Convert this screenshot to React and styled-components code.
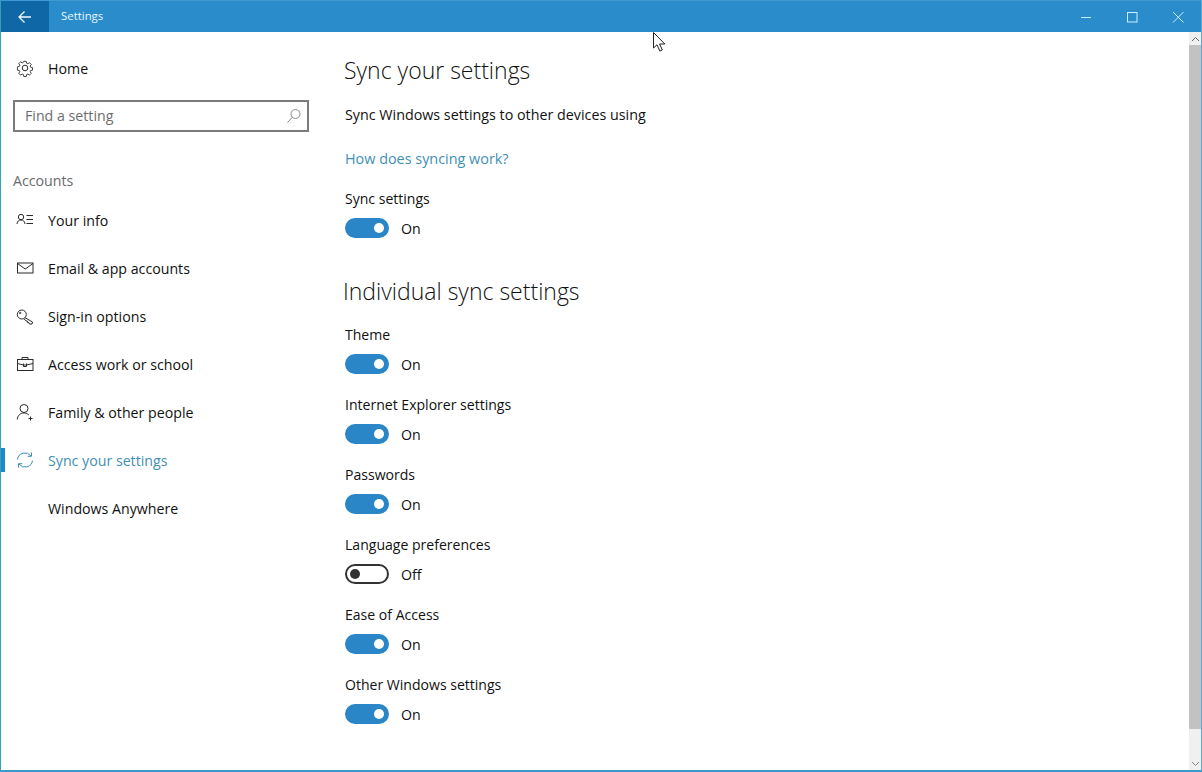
import React from "react";
import styled, { createGlobalStyle } from "styled-components";

const Global = createGlobalStyle`
  html, body { margin: 0; padding: 0; background: #fff; }
  * { box-sizing: border-box; }
`;

const Win = styled.div`
  position: relative;
  width: 1202px;
  height: 772px;
  display: flex;
  flex-direction: column;
  overflow: hidden;
  background: #fff;
  font-family: "Open Sans", "Noto Sans", sans-serif;
  color: #111;
  border-left: 1px solid #35a0b8;
  border-right: 1px solid #5aa9d6;
  border-bottom: 2px solid #3a9cc4;
`;
const TitleBar = styled.header`
  height: 32px;
  margin-left: -1px;
  margin-right: -1px;
  padding-right: 1px;
  flex: none;
  display: flex;
  align-items: center;
  background: #2a8ccb;
  border-top: 1px solid #3f9ad3;
  color: #e6f6ff;
`;
const BackBtn = styled.div`
  width: 49px;
  height: 31px;
  display: flex;
  align-items: center;
  justify-content: center;
  background: #0f67a6;
`;
const AppName = styled.span`
  margin-left: 12px;
  padding-bottom: 2px;
  font-size: 11.4px;
  flex: 1;
`;
const WinBtn = styled.div`
  width: 46px;
  height: 31px;
  display: flex;
  align-items: center;
  justify-content: center;
`;
const Body = styled.div`
  flex: 1;
  display: flex;
  min-height: 0;
`;
const Sidebar = styled.nav`
  width: 342px;
  flex: none;
  padding-top: 12px;
  display: flex;
  flex-direction: column;
`;
const Row = styled.div`
  position: relative;
  height: 48px;
  display: flex;
  align-items: center;
  font-size: 14.2px;
  color: ${p => (p.$active ? "#3f8fb4" : "#111")};
`;
const Marker = styled.span`
  position: absolute;
  left: -1px;
  top: 12px;
  width: 5px;
  height: 24px;
  background: #1f88c9;
`;
const IconSlot = styled.span`
  width: 47px;
  padding-left: 15px;
  flex: none;
  display: flex;
  align-items: center;
`;
const Search = styled.div`
  margin: 8px 0 0 12px;
  width: 296px;
  height: 32px;
  border: 2px solid #7b7b7b;
  display: flex;
  align-items: center;
  justify-content: space-between;
  padding: 0 5px 0 10px;
  font-size: 14.2px;
  color: #6d6d6d;
`;
const SearchText = styled.span`
  padding-bottom: 2px;
`;
const Group = styled.div`
  margin: 39px 0 5px 12px;
  height: 20px;
  line-height: 20px;
  font-size: 14.2px;
  color: #6a6a6a;
`;
const Main = styled.main`
  flex: 1;
  padding: 23px 0 0 1px;
`;
const H1 = styled.h1`
  margin: 0;
  height: 32px;
  line-height: 31px;
  font-size: 23px;
  font-weight: 300;
  color: #111;
`;
const H2 = styled(H1)`
  margin: 38px 0 17px -1px;
`;
const Para = styled.p`
  margin: 18px 0 0 1px;
  height: 20px;
  line-height: 20px;
  font-size: 14.3px;
`;
const Link = styled.a`
  display: block;
  margin: 24px 0 20px 1px;
  height: 20px;
  line-height: 20px;
  font-size: 14.4px;
  color: #3f8fb4;
`;
const Settings = styled.div`
  display: flex;
  flex-direction: column;
  gap: 21px;
`;
const Setting = styled.div`
  margin-left: 1px;
`;
const Label = styled.div`
  height: 20px;
  line-height: 20px;
  font-size: 14.05px;
  margin-bottom: 9px;
`;
const ToggleRow = styled.div`
  display: flex;
  align-items: center;
  gap: 12px;
  height: 20px;
  font-size: 14.2px;
`;
const Track = styled.span`
  width: 44px;
  height: 20px;
  border-radius: 10px;
  display: flex;
  align-items: center;
  padding: 0 3px;
  justify-content: ${p => (p.$on ? "flex-end" : "flex-start")};
  background: ${p => (p.$on ? "#2a86c6" : "#fff")};
  border: 2px solid ${p => (p.$on ? "#2a86c6" : "#333")};
`;
const Knob = styled.span`
  width: 10px;
  height: 10px;
  border-radius: 50%;
  background: ${p => (p.$on ? "#fff" : "#333")};
`;
const Scrollbar = styled.div`
  width: 12px;
  flex: none;
  display: flex;
  flex-direction: column;
  background: #f0f0f0;
`;
const Arrow = styled.div`
  height: ${p => p.$h}px;
  flex: none;
  display: flex;
  align-items: ${p => p.$end ? "flex-end" : "center"};
  justify-content: center;
  padding-bottom: ${p => p.$end ? "3px" : "0"};
`;
const Thumb = styled.div`
  height: 684px;
  flex: none;
  background: #c2c2c2;
`;
const Cursor = styled.svg`
  position: absolute;
  left: 650px;
  top: 31px;
`;

const Svg = ({ children, color = "#2b2b2b" }) => (
  <svg width="18" height="18" viewBox="0 0 18 18" fill="none" stroke={color} strokeWidth="1">
    {children}
  </svg>
);
const Gear = () => (
  <Svg>
    <circle cx="9" cy="9" r="2.800" />
    <path d="M7.600 1.500h2.800l.4 2.100 1.400.6 1.800-1.200 2 2-1.200 1.800.6 1.400 2.100.4v2.800l-2.100.4-.6 1.400 1.200 1.800-2 2-1.800-1.200-1.400.6-.4 2.100H7.600l-.4-2.100-1.400-.6-1.800 1.200-2-2 1.200-1.800-.6-1.400-2.100-.4V7.600l2.100-.4.6-1.400-1.200-1.800 2-2 1.800 1.200 1.400-.6z" transform="translate(1 1) scale(.89)" />
  </Svg>
);
const Info = () => (
  <Svg>
    <circle cx="5" cy="6" r="2.700" />
    <path d="M1 13c.4-2.800 1.800-4 4-4s3.600 1.200 4 4M10.500 4.500H17M10.500 8.500H17M10.500 12.500H17" />
  </Svg>
);
const Mail = () => (
  <Svg>
    <rect x="1.500" y="4" width="15.500" height="10" />
    <path d="M1.500 4.500l7.750 5.500L17 4.500" />
  </Svg>
);
const Key = () => (
  <Svg>
    <circle cx="5.800" cy="7.500" r="4.500" />
    <circle cx="4.200" cy="6" r=".7" />
    <path d="M9 10.700l7.500 4.300-.5 2h-2.500l-.5-1.300-1.500-.2-.2-1.400-1.300-.2L7.800 11.600" />
  </Svg>
);
const Brief = () => (
  <Svg>
    <rect x="1.500" y="4.500" width="15.500" height="11" />
    <path d="M6 4.500V2.500h6v2M1.500 8.500l6 1.500h3l6.500-1.500M7.500 8.500v3h3v-3" />
  </Svg>
);
const Person = () => (
  <Svg>
    <circle cx="8" cy="5.500" r="4" />
    <path d="M1.200 16.500c.3-3.800 3-6.500 6.800-6.500 2 0 3.600.7 4.800 2M14.500 13.500v4M12.500 15.500h4" />
  </Svg>
);
const Sync = () => (
  <Svg color="#3f8fb4">
    <path d="M1.500 8.500A7.500 7.500 0 0 1 15 5M16.500 9.500A7.500 7.500 0 0 1 3 13" />
    <path d="M15.500 1.500V5.300h-3.800M2.500 16.500v-3.800h3.800" />
  </Svg>
);

const Toggle = ({ on = true }) => (
  <ToggleRow>
    <Track $on={on}><Knob $on={on} /></Track>
    <span>{on ? "On" : "Off"}</span>
  </ToggleRow>
);
const Item = ({ label, on }) => (
  <Setting>
    <Label>{label}</Label>
    <Toggle on={on} />
  </Setting>
);

const nav = [
  ["Your info", <Info />],
  ["Email & app accounts", <Mail />],
  ["Sign-in options", <Key />],
  ["Access work or school", <Brief />],
  ["Family & other people", <Person />],
  ["Sync your settings", <Sync />, true],
  ["Windows Anywhere", null],
];
const items = [
  ["Theme", true],
  ["Internet Explorer settings", true],
  ["Passwords", true],
  ["Language preferences", false],
  ["Ease of Access", true],
  ["Other Windows settings", true],
];

export default function App() {
  return (
    <Win>
      <Global />
      <TitleBar>
        <BackBtn>
          <svg width="16" height="14" viewBox="0 0 16 14" fill="none" stroke="#f2fbff" strokeWidth="1.300">
            <path d="M14 7H2M7.500 1.500L2 7l5.500 5.500" />
          </svg>
        </BackBtn>
        <AppName>Settings</AppName>
        <WinBtn>
          <svg width="12" height="12" viewBox="0 0 12 12" stroke="#c8f2ff"><path d="M1 6.500h10" /></svg>
        </WinBtn>
        <WinBtn>
          <svg width="12" height="12" viewBox="0 0 12 12" fill="none" stroke="#c8f2ff"><rect x="1.500" y="1.500" width="9.500" height="9.500" /></svg>
        </WinBtn>
        <WinBtn>
          <svg width="12" height="12" viewBox="0 0 12 12" fill="none" stroke="#c8f2ff"><path d="M1 1l10.500 10.500M11.500 1L1 11.500" /></svg>
        </WinBtn>
      </TitleBar>
      <Body>
        <Sidebar>
          <Row><IconSlot><Gear /></IconSlot>Home</Row>
          <Search>
            <SearchText>Find a setting</SearchText>
            <svg width="16" height="16" viewBox="0 0 16 16" fill="none" stroke="#8a8a8a">
              <circle cx="9.500" cy="6" r="4.500" />
              <path d="M6.300 9.300L1.500 14.500" />
            </svg>
          </Search>
          <Group>Accounts</Group>
          {nav.map(([t, icon, active]) => (
            <Row key={t} $active={active}>
              {active && <Marker />}
              <IconSlot>{icon}</IconSlot>
              {t}
            </Row>
          ))}
        </Sidebar>
        <Main>
          <H1>Sync your settings</H1>
          <Para>Sync Windows settings to other devices using</Para>
          <Link>How does syncing work?</Link>
          <Setting>
            <Label>Sync settings</Label>
            <Toggle />
          </Setting>
          <H2>Individual sync settings</H2>
          <Settings>
            {items.map(([l, on]) => <Item key={l} label={l} on={on} />)}
          </Settings>
        </Main>
        <Scrollbar>
          <Arrow $h={13}>
            <svg width="9" height="6" viewBox="0 0 9 6" fill="none" stroke="#666"><path d="M1 5l3.500-3.500L8 5" /></svg>
          </Arrow>
          <Thumb />
          <Arrow $h={41} $end>
            <svg width="9" height="6" viewBox="0 0 9 6" fill="none" stroke="#888"><path d="M1 1l3.500 3.500L8 1" /></svg>
          </Arrow>
        </Scrollbar>
      </Body>
      <Cursor width="16" height="22" viewBox="0 0 16 22">
        <path d="M2.500 1.500V17L6 13.800L8.800 20L11.300 19L8.600 13H13.800Z" fill="#fff" stroke="#222" strokeWidth="1" />
      </Cursor>
    </Win>
  );
}
